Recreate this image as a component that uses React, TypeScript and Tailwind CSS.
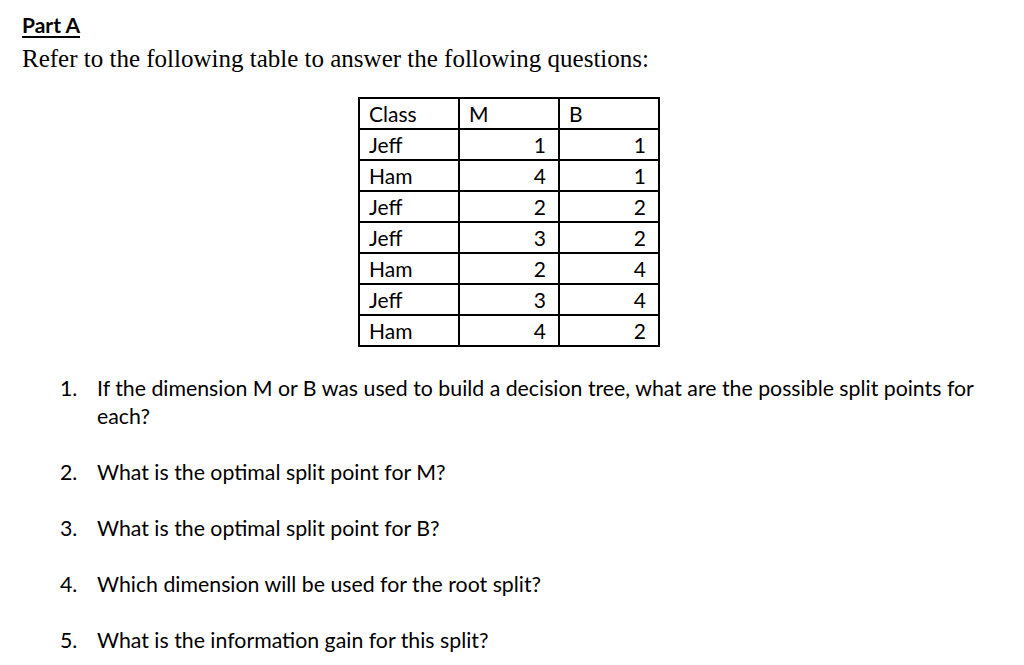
import React from 'react'

const rows: [string, number, number][] = [
  ['Jeff', 1, 1],
  ['Ham', 4, 1],
  ['Jeff', 2, 2],
  ['Jeff', 3, 2],
  ['Ham', 2, 4],
  ['Jeff', 3, 4],
  ['Ham', 4, 2],
]

const questions = [
  'If the dimension M or B was used to build a decision tree, what are the possible split points for each?',
  'What is the optimal split point for M?',
  'What is the optimal split point for B?',
  'Which dimension will be used for the root split?',
  'What is the information gain for this split?',
]

const sans = "font-['Lato','Open_Sans',sans-serif]"

export default function App() {
  return (
    <div className="w-[1024px] h-[665px] bg-white text-black overflow-hidden">
      <div className="pl-[22px] pt-[12px]">
        {/* Heading */}
        <div className={`${sans} text-[21px] leading-[26px] font-bold underline underline-offset-[3px] decoration-2`}>
          Part A
        </div>
        <p className="font-['Liberation_Serif',serif] text-[25px] leading-[30px] mt-[6px]">
          Refer to the following table to answer the following questions:
        </p>
      </div>

      {/* Data table */}
      <table className={`${sans} ml-[358px] mt-[23px] border-collapse text-[21px]`}>
        <thead>
          <tr className="h-[31px]">
            <td className="w-[100px] border-2 border-black pl-[9px] leading-none">Class</td>
            <td className="w-[100px] border-2 border-black pl-[9px] leading-none">M</td>
            <td className="w-[100px] border-2 border-black pl-[9px] leading-none">B</td>
          </tr>
        </thead>
        <tbody>
          {rows.map(([cls, m, b], i) => (
            <tr key={i} className="h-[31px]">
              <td className="border-2 border-black pl-[9px] leading-none">{cls}</td>
              <td className="border-2 border-black pr-[12px] text-right leading-none">{m}</td>
              <td className="border-2 border-black pr-[12px] text-right leading-none">{b}</td>
            </tr>
          ))}
        </tbody>
      </table>

      {/* Questions */}
      <ol className={`${sans} text-[21.3px] leading-[28px] mt-[27px] pr-[30px]`}>
        {questions.map((q, i) => (
          <li key={i} className="flex mb-[28px]">
            <span className="w-[97px] shrink-0 pl-[60px]">{i + 1}.</span>
            <span>{q}</span>
          </li>
        ))}
      </ol>
    </div>
  )
}
